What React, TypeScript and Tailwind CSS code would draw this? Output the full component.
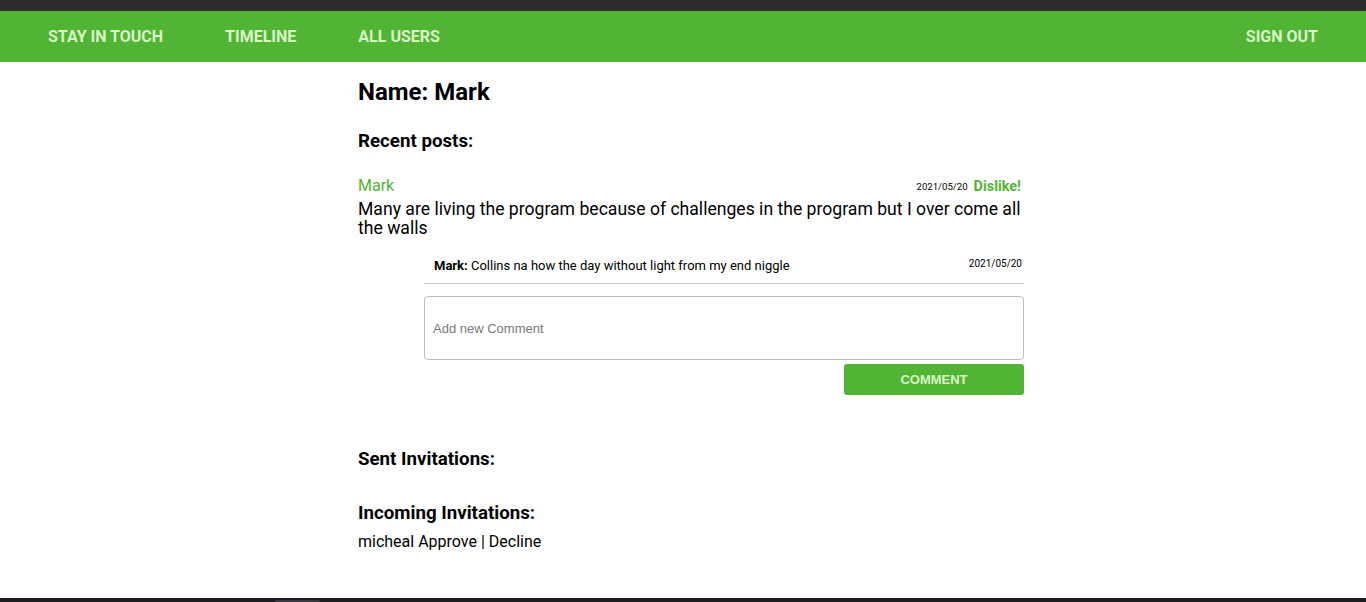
import React from 'react'

const navItems = ['STAY IN TOUCH', 'TIMELINE', 'ALL USERS']

export default function App() {
  return (
    <div className="min-h-[602px] flex flex-col bg-white text-black font-['Roboto',sans-serif]">
      <div className="h-[11px] bg-[#2b2b2b]" />
      <nav className="h-[51px] bg-[#52b434] flex items-center justify-between pl-[17px] pr-[18px]">
        <ul className="flex items-center">
          {navItems.map((item) => (
            <li key={item} className="px-[31px] text-[16px] font-bold text-[#d8f6c6]">
              {item}
            </li>
          ))}
        </ul>
        <span className="px-[30px] text-[16px] font-bold text-[#d8f6c6]">SIGN OUT</span>
      </nav>

      <main className="flex-1 pl-[358px]">
        <div className="w-[666px]">
          <h1 className="mt-[16px] text-[24px] font-bold leading-[28px]">Name: Mark</h1>
          <h2 className="mt-[24px] text-[18.72px] font-bold leading-[22px]">Recent posts:</h2>

          <div className="mt-[24px]">
            <div className="flex items-end justify-between h-[20px]">
              <span className="text-[16px] text-[#52b434] leading-[20px]">Mark</span>
              <div className="flex items-center gap-[6px] pr-[3px]">
                <span className="text-[9.6px] leading-[12px]">2021/05/20</span>
                <span className="text-[14.4px] font-bold text-[#52b434] leading-[18px]">Dislike!</span>
              </div>
            </div>
            <p className="text-[17.6px] leading-[19px] mt-[4px]">
              Many are living the program because of challenges in the program but I over come all the walls
            </p>

            <div className="ml-[66px] mt-[14px]">
              <div className="flex items-start justify-between border-b border-[#c4c4c4] h-[32px] pt-[6px] pl-[10px]">
                <span className="text-[13px] leading-[16px]">
                  <b>Mark:</b> Collins na how the day without light from my end niggle
                </span>
                <span className="text-[10px] leading-[12px] pr-[2px]">2021/05/20</span>
              </div>
              <input
                placeholder="Add new Comment"
                className="mt-[12px] block w-full h-[64px] border border-[#bdbdbd] rounded-[4px] px-[8px] text-[13px] font-['Liberation_Sans',sans-serif] placeholder:text-[#777] outline-none"
              />
              <div className="flex justify-end mt-[4px]">
                <button className="w-[180px] h-[31px] bg-[#52b434] rounded-[3px] text-[13px] font-bold text-[#d8f6c6] font-['Liberation_Sans',sans-serif]">
                  COMMENT
                </button>
              </div>
            </div>
          </div>

          <h2 className="mt-[53px] text-[18.72px] font-bold leading-[22px]">Sent Invitations:</h2>
          <h2 className="mt-[32px] text-[18.72px] font-bold leading-[22px]">Incoming Invitations:</h2>
          <p className="mt-[8px] text-[16px] leading-[20px]">micheal Approve | Decline</p>
        </div>
      </main>

      <div className="h-[4px] bg-[#1f1a20] relative">
        <div className="absolute left-[275px] top-[2px] w-[45px] h-[2px] rounded-t bg-[#3a3540]" />
      </div>
    </div>
  )
}
